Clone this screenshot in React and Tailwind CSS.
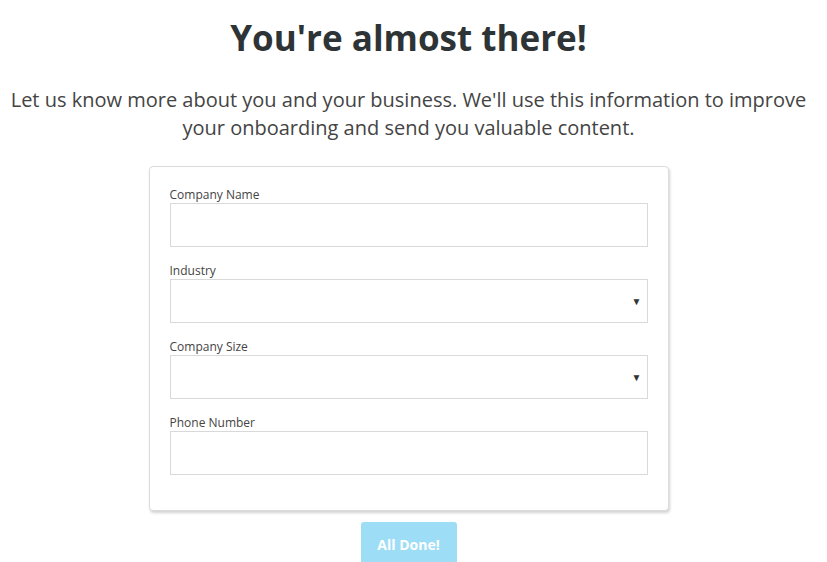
import React from 'react';

const Caret = () => (
  <span className="absolute right-[6px] top-1/2 -translate-y-1/2 text-[10px] text-[#333] pointer-events-none">▼</span>
);

function Field({ label, select }) {
  return (
    <div className="mb-[16px]">
      <label className="block text-[12px] leading-[16px] text-[#444]">{label}</label>
      <div className="relative">
        <div className="h-[44px] w-full border border-[#d9d9d9] bg-white" />
        {select && <Caret />}
      </div>
    </div>
  );
}

export default function App() {
  return (
    <div className="min-h-[562px] bg-white pr-[10px] text-center" style={{ fontFamily: '"Open Sans", sans-serif' }}>
      <h1 className="pt-[14px] text-[35px] leading-[48px] font-bold text-[#2e3436]">You're almost there!</h1>
      <p className="mt-[24px] text-[20px] leading-[28px] text-[#444]">
        Let us know more about you and your business. We'll use this information to improve
        <br />
        your onboarding and send you valuable content.
      </p>
      <div className="mx-auto mt-[24px] w-[520px] rounded-[4px] border border-[#dcdcdc] bg-white px-[20px] pt-[20px] pb-[19px] text-left shadow-[1px_2px_3px_rgba(0,0,0,0.18)]">
        <Field label="Company Name" />
        <Field label="Industry" select />
        <Field label="Company Size" select />
        <Field label="Phone Number" />
      </div>
      <button className="mt-[11px] h-[44px] w-[96px] rounded-[3px] bg-[#9dddf5] text-[14px] font-bold text-white">
        All Done!
      </button>
    </div>
  );
}
